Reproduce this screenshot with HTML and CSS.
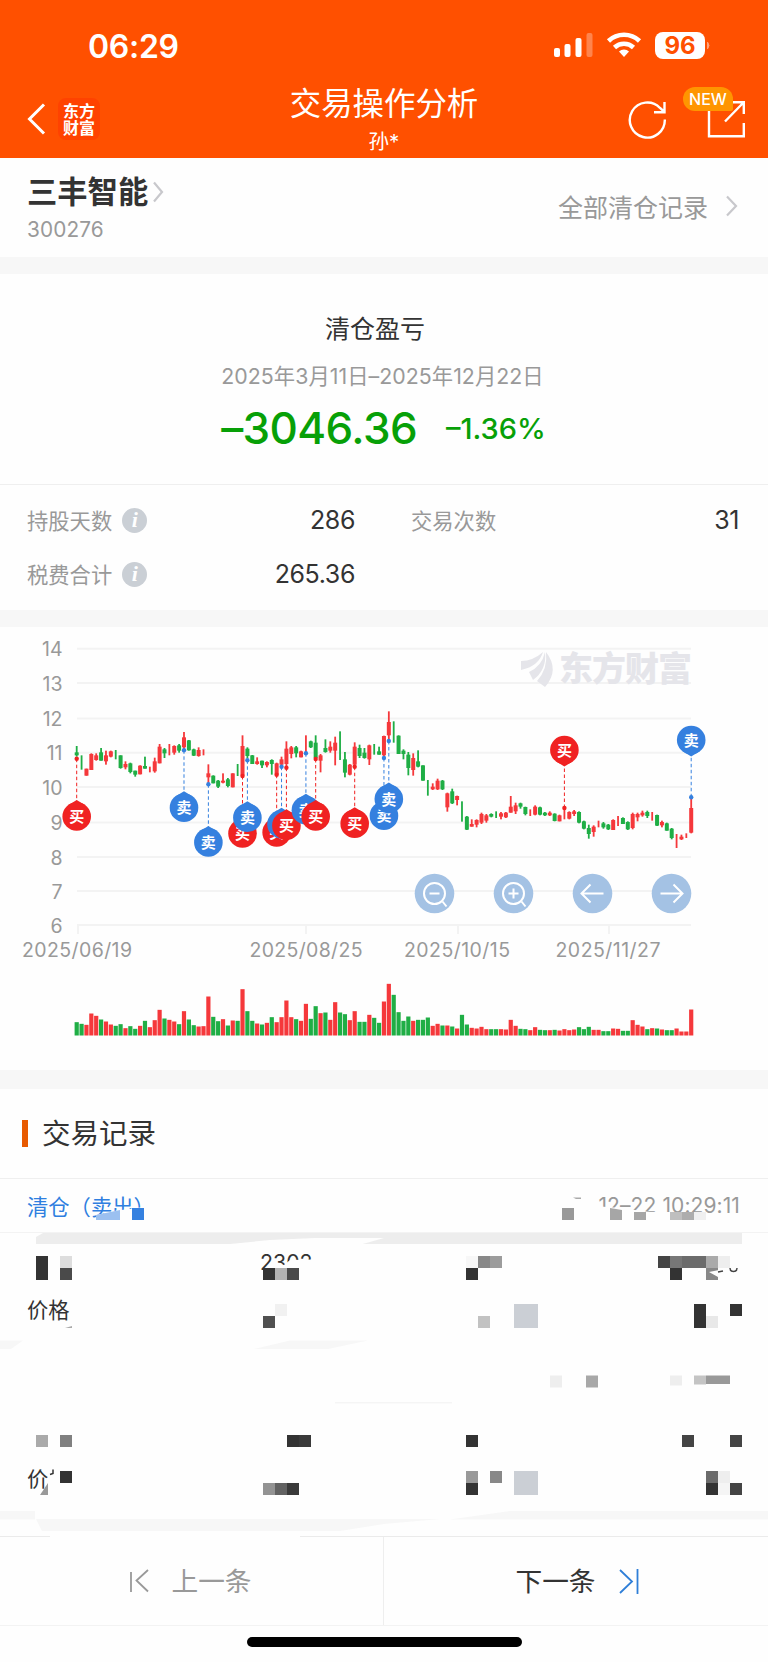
FILE: index.html
```html
<!DOCTYPE html>
<html lang="zh-CN">
<head>
    <meta charset="UTF-8">
    <meta name="viewport" content="width=device-width, initial-scale=1.0">
    <title>交易操作分析</title>
    <link rel="stylesheet" href="styles.css">
</head>
<body>
    <header>
        <div class="status-bar">
            <span class="time">06:29</span>
            <svg class="status-icons" width="160" height="30" viewBox="0 0 160 30">
                <g fill="#fff">
                    <rect x="3" y="17" width="6" height="9" rx="2"/>
                    <rect x="13.500" y="13" width="6" height="13" rx="2"/>
                    <rect x="24.500" y="7" width="6" height="19" rx="2"/>
                    <rect x="35.500" y="2" width="6" height="24" rx="2" opacity=".3"/>
                    <path d="M73 26l-5-5.500a7.500 7.500 0 0 1 10 0z"/>
                </g>
                <g fill="none" stroke="#fff" stroke-width="4.600">
                    <path d="M63.500 16.500a14 14 0 0 1 19 0"/>
                    <path d="M57.500 10a22.500 22.500 0 0 1 31 0"/>
                </g>
                <rect x="104" y="1" width="50" height="27" rx="8" fill="#fff"/>
                <path d="M156.500 11q3 3.500 0 7z" fill="#ffa27a" stroke="#ffa27a"/>
                <text x="129" y="23" class="battery">96</text>
            </svg>
        </div>
        <div class="nav-bar">
            <svg width="20" height="32" viewBox="0 0 20 32" fill="none" stroke="#fff" stroke-width="3"><path d="M18 1.500L3.500 16 18 30.500"/></svg>
            <div class="logo">东方<br>财富</div>
            <div class="titles">
                <h1>交易操作分析</h1>
                <p>孙*</p>
            </div>
            <div class="tools">
                <svg width="40" height="40" viewBox="0 0 40 40" fill="none" stroke="#fff" stroke-width="2.400"><path d="M37.800 20.500A17.500 17.500 0 1 1 33 9l4 3.500M37.500 3v10.300H27"/></svg>
                <svg width="40" height="40" viewBox="0 0 40 40" fill="none" stroke="#fff" stroke-width="2.400"><path d="M12 3.500H3v33.800h34.800V24M27 3.200h10.800V15M37.500 3.500L19 22.500"/></svg>
                <span class="badge">NEW</span>
            </div>
        </div>
    </header>

    <section class="stock">
        <div>
            <h2>三丰智能<svg width="14" height="22" viewBox="0 0 14 22"><path d="M3 1.500l8 9.500-8 9.500"/></svg></h2>
            <p>300276</p>
        </div>
        <a class="all">全部清仓记录<svg width="14" height="22" viewBox="0 0 14 22"><path d="M2 1.500l9 9.500-9 9.500"/></svg></a>
    </section>

    <section class="profit">
        <h3>清仓盈亏</h3>
        <p class="range">2025年3月11日–2025年12月22日</p>
        <p class="result"><b>–3046.36</b><span>–1.36%</span></p>
    </section>

    <section class="stats">
        <div class="stat"><span>持股天数</span><i>i</i><em>286</em></div>
        <div class="stat"><span>交易次数</span><em>31</em></div>
        <div class="stat"><span>税费合计</span><i>i</i><em>265.36</em></div>
    </section>

    <section class="chart">
        <svg id="chart" width="768" height="443" viewBox="0 627 768 443"></svg>
    </section>

    <section class="records">
        <h3 class="records-title">交易记录</h3>
        <div class="record-head">
            <span>清仓（卖出）</span>
            <time>12–22 10:29:11</time>
        </div>
        <div class="record-row"><span></span><span class="amount">2302</span></div>
        <div class="record-row"><span>价格</span></div>
        <div class="record-row last"><span>价</span></div>
        <svg id="mosaic" class="mosaic" width="768" height="358" viewBox="0 1179 768 358"></svg>
    </section>

    <footer>
        <div class="prev">
            <svg width="20" height="26" viewBox="0 0 20 26"><path d="M2 4v20M19 2L7.500 12.500 19 23.500"/></svg>
            <span>上一条</span>
        </div>
        <div class="next">
            <span>下一条</span>
            <svg width="22" height="28" viewBox="0 0 22 28"><path d="M2 3l12 11.500L2 26M19.500 2v25"/></svg>
        </div>
    </footer>
    <div class="home"></div>

    <script src="script.js"></script>
</body>
</html>
```

FILE: styles.css
```css
* {
    box-sizing: border-box;
}

body {
    font-family: Inter, "Noto Sans CJK SC", sans-serif;
    margin: 0;
    height: 1662px;
    background-color: #fefefe;
    color: #333;
    overflow: hidden;
}

h1, h2, h3, p {
    margin: 0;
    font-weight: 400;
}

header {
    height: 158px;
    background-color: #ff5000;
    color: white;
}

.status-bar {
    height: 82px;
    padding: 31px 57px 0 88px;
    display: flex;
    justify-content: space-between;
}

.time {
    font-size: 32px;
    line-height: 31px;
    font-weight: 600;
    letter-spacing: -0.3px;
}

.battery {
    font-size: 24px;
    font-weight: 700;
    fill: #ff5000;
    text-anchor: middle;
}

.nav-bar {
    position: relative;
    height: 76px;
    padding: 0 22px 2px 26px;
    display: flex;
    align-items: center;
}

.logo {
    width: 42px;
    height: 42px;
    margin-left: 12px;
    border-radius: 8px;
    background-color: #ff4200;
    font-family: "Noto Sans CJK SC", sans-serif;
    font-size: 16px;
    line-height: 17px;
    font-weight: 700;
    padding-top: 4px;
    text-align: center;
}

.titles {
    position: absolute;
    left: 0;
    right: 0;
    top: 2px;
    text-align: center;
}

.titles h1 {
    font-size: 31.4px;
    line-height: 40px;
}

.titles p {
    font-size: 20.5px;
    line-height: 35px;
}

.tools {
    position: relative;
    margin-left: auto;
    display: flex;
    gap: 39px;
}

.badge {
    position: absolute;
    left: 56px;
    top: -12px;
    width: 50px;
    height: 24px;
    border-radius: 12px 12px 2px 12px;
    background-color: #ff9500;
    font-size: 16px;
    line-height: 24px;
    font-weight: 500;
    text-align: center;
}

.stock {
    height: 116px;
    padding: 15px 29px 0 27px;
    border-bottom: 17px solid #f7f7f7;
    display: flex;
    justify-content: space-between;
}

.stock h2 {
    font-size: 30.3px;
    line-height: 39px;
    font-weight: 700;
}

.stock svg {
    fill: none;
    stroke: #c8c8cc;
    stroke-width: 2.2;
    margin-left: 3px;
}

.stock p {
    color: #999;
    font-size: 20.8px;
    line-height: 35px;
    letter-spacing: 0.1px;
}

.all {
    display: flex;
    align-items: center;
    height: 66px;
    color: #999;
    font-size: 25px;
}

.stock .all svg {
    margin-left: 17px;
}

.profit {
    height: 211px;
    padding-top: 35px;
    border-bottom: 1px solid #efefef;
    text-align: center;
}

.profit h3 {
    padding-right: 18px;
    font-size: 25px;
    line-height: 40px;
}

.range {
    margin-top: 7px;
    padding-right: 3px;
    color: #999;
    font-size: 21.3px;
    line-height: 40px;
    letter-spacing: 0.05px;
}

.result {
    height: 64px;
    padding-right: 1px;
    display: flex;
    justify-content: center;
    align-items: center;
    gap: 29px;
    color: #07a007;
}

.result b {
    font-size: 44px;
    font-weight: 550;
    letter-spacing: -0.6px;
}

.result span {
    font-size: 29px;
    font-weight: 550;
    letter-spacing: 0;
}

.stats {
    height: 142px;
    padding: 8px 28px 0 27px;
    border-bottom: 17px solid #f7f7f7;
    display: grid;
    grid-template-columns: 328px 328px;
    grid-auto-rows: 54px;
    column-gap: 56px;
}

.stat {
    display: flex;
    align-items: center;
    color: #999;
    font-size: 21.3px;
}

.stat span {
    padding-bottom: 2px;
}

.stat i {
    width: 25px;
    height: 25px;
    margin-left: 10px;
    border-radius: 50%;
    background-color: #cacfd5;
    color: white;
    font: italic bold 22px/24px "Liberation Serif", serif;
    text-align: center;
}

.stat em {
    margin-left: auto;
    color: #333;
    font-size: 25px;
    font-style: normal;
    letter-spacing: -0.4px;
}

.chart {
    height: 462px;
    border-bottom: 19px solid #f7f7f7;
}

.chart svg {
    display: block;
}

.grid {
    stroke: #f3f3f3;
    stroke-width: 2;
}

.axis {
    fill: #999;
    font-size: 19.5px;
}

.watermark {
    fill: #e5e5ea;
    font-size: 34px;
    font-weight: 900;
}

.pin-text {
    fill: white;
    font-size: 15px;
    font-weight: 700;
    text-anchor: middle;
}

.control {
    fill: none;
    stroke: white;
    stroke-width: 2;
}

.records {
    position: relative;
    height: 447px;
}

.records-title {
    height: 90px;
    padding-left: 42px;
    border-bottom: 1px solid #efefef;
    font-size: 28.5px;
    line-height: 89px;
}

.records-title::before {
    content: "";
    float: left;
    width: 6px;
    height: 27px;
    margin: 31px 0 0 -20px;
    background-color: #e85a00;
}

.record-head {
    height: 54px;
    padding: 0 28px 1px 27px;
    display: flex;
    justify-content: space-between;
    align-items: center;
    border-bottom: 1px solid #f3f3f3;
    color: #2f7fe0;
    font-size: 21.3px;
}

.record-head time {
    color: #999;
    font-size: 21px;
    letter-spacing: 0.1px;
}

.record-row {
    height: 46px;
    padding: 0 27px;
    display: grid;
    grid-template-columns: 233px 1fr;
    align-items: center;
    font-size: 21.3px;
}

.record-row:nth-of-type(2) {
    margin-top: 6px;
}

.last {
    margin-top: 123px;
}

.mosaic {
    position: absolute;
    left: 0;
    top: 90px;
}

footer {
    height: 90px;
    display: flex;
    border-bottom: 1px solid #f3f3f3;
    font-size: 26.7px;
}

footer div {
    flex: 1;
    display: flex;
    align-items: center;
    justify-content: center;
}

footer span {
    padding-bottom: 2px;
}

.prev {
    padding-right: 2px;
    gap: 22px;
    border-right: 1px solid #eee;
    color: #999;
}

.next {
    gap: 22px;
    padding-left: 3px;
}

footer svg {
    fill: none;
    stroke: #999;
    stroke-width: 1.8;
}

.next svg {
    stroke: #2f7fd8;
}

.home {
    width: 275px;
    height: 10px;
    margin: 11px auto 0;
    border-radius: 5px;
    background-color: black;
}
```

FILE: script.js
```js
const RED = '#f5383b', GREEN = '#1fae45';
const STEP = 4.877, START = 76.7;
const xAt = i => START + STEP * i;

// color, wick top, wick bottom, body top, body bottom, volume (thirds of a pixel)
const days = `g 348 380 367 376 40|g 376 419 0 0 35|r 416 437 416 437 32|r 370 420 372 420 66|r 370 392 376 390 59|g 354 392 367 392 48|r 362 404 376 394 42|r 362 382 364 380 33|g 360 388 0 0 29|g 376 416 376 414 34
r 394 418 402 412 22|g 398 430 400 426 28|g 422 440 422 434 20|r 406 433 407 433 29|g 380 416 408 416 44|r 410 427 0 0 25|r 383 428 394 424 46|r 342 400 350 400 77|g 354 384 358 370 51|r 342 376 0 0 47
r 346 374 348 368 42|g 342 368 346 362 34|r 306 360 322 352 73|g 330 362 331 361 48|g 356 378 358 377 31|r 352 380 360 378 27|r 358 376 0 0 28|r 403 460 430 442 117|g 436 460 437 460 56|g 450 474 452 470 43
r 430 460 452 458 49|g 444 472 448 468 30|r 430 472 430 472 45|g 402 438 0 0 44|r 316 437 348 437 139|g 352 385 356 378 73|g 375 402 376 402 44|r 382 404 394 402 36|g 392 414 392 406 33|r 394 412 396 406 38
g 388 434 390 402 55|r 398 433 400 433 40|r 380 408 388 404 55|r 334 410 356 402 105|r 348 385 352 372 55|g 348 382 352 370 49|r 362 382 364 382 44|r 316 370 0 0 95|g 332 354 334 352 50|g 316 386 338 384 88
r 372 427 376 392 67|g 328 368 354 366 69|r 334 368 350 362 47|r 320 406 338 362 100|g 304 390 0 0 69|g 366 442 388 428 64|r 402 436 404 434 46|r 337 408 350 404 73|g 344 384 354 378 41|g 354 386 368 384 41
r 344 405 346 388 62|g 342 374 0 0 53|g 350 374 364 374 38|r 317 384 318 376 102|r 244 330 276 316 155|g 274 338 0 0 122|g 316 372 317 372 70|g 358 388 362 372 44|g 366 436 374 414 57|r 370 437 384 420 44
g 361 412 394 410 47|g 406 452 406 452 47|g 450 497 0 0 54|r 460 480 470 478 29|r 446 480 452 478 35|g 450 480 452 478 30|r 488 545 490 532 30|g 476 522 484 520 27|r 497 526 498 510 21|g 514 575 0 0 62
g 558 600 560 599 33|r 568 590 582 590 23|r 568 592 570 584 21|r 548 582 552 578 26|r 552 578 556 572 19|g 550 562 552 560 19|g 544 564 0 0 19|r 546 568 550 560 19|r 546 564 548 562 18|r 498 548 530 548 47
r 518 552 526 544 29|g 518 536 520 530 20|g 530 556 531 552 19|r 538 558 0 0 16|r 526 556 530 554 25|g 530 556 532 554 17|g 546 558 548 556 16|r 544 558 548 556 16|g 550 574 551 573 17|r 554 574 556 574 15
r 532 568 0 0 19|r 544 568 546 566 16|r 540 558 544 552 18|g 544 580 546 578 25|g 572 598 574 596 19|g 584 626 594 612 26|r 586 620 590 606 17|r 572 592 0 0 17|g 576 596 580 592 13|g 582 600 584 598 13
r 568 600 570 600 21|r 558 588 0 0 20|g 562 582 564 582 14|g 574 600 576 598 14|r 548 598 552 594 46|r 548 574 552 562 32|r 542 560 548 556 27|g 542 564 546 558 19|r 546 572 0 0 22|g 554 588 555 587 21
r 572 592 576 586 18|g 578 602 580 602 16|g 594 628 596 624 16|r 612 654 0 0 21|r 614 630 620 628 12|r 610 624 0 0 12|r 507 610 534 608 78`.split(/[|\n]/);

// day index, price dot y, circle y, side
const pins = [
    [0, 758.7, 816.5, '买'], [22, 750.3, 807.7, '卖'], [27, 784.3, 842.4, '卖'],
    [34, 776, 833.4, '买'], [35, 760.3, 817.7, '卖'], [41, 774.7, 832.4, '买'],
    [42, 766.7, 824.2, '卖'], [43, 767.7, 825.7, '买'], [47, 753.3, 810.2, '卖'],
    [49, 759, 816.5, '买'], [57, 766.7, 823.7, '买'], [63, 758, 815.7, '卖'],
    [64, 741, 799, '卖'], [100, 808, 750, '买'], [126, 797.3, 740, '卖']
];

function rect(x, y, w, h, fill) {
    return `<rect x="${x}" y="${y}" width="${w}" height="${h}" fill="${fill}"/>`;
}

function drawChart() {
    let svg = '';

    [648.7, 683, 718.5, 752.7, 787, 822.5, 857, 891, 925].forEach((y, i) => {
        svg += `<path class="grid" d="M77 ${y}H691"/>`;
        svg += `<text class="axis" x="62.500" y="${y + 7.5}" text-anchor="end">${14 - i}</text>`;
    });

    [[78, 77, '2025/06/19', 110], [306, 306, '2025/08/25', 113], [458, 457, '2025/10/15', 106], [609, 608, '2025/11/27', 105]].forEach(d => {
        svg += `<path class="grid" d="M${d[0]} 925v9"/>`;
        svg += `<text class="axis" x="${d[1]}" y="956.500" text-anchor="middle" textLength="${d[3]}">${d[2]}</text>`;
    });

    // watermark
    svg += `<g fill="#e5e5ea"><path d="M521 661q12 0 22-9-4 14-22 18z"/><path d="M529 672q13-6 16-20 2 18-12 28z"/><path d="M537 681q11-12 9-29 14 18-1 35z"/></g>`;
    svg += `<text class="watermark" x="559" y="681" textLength="133">东方财富</text>`;

    days.forEach((day, i) => {
        const d = day.trim().split(' ');
        const color = d[0] === 'r' ? RED : GREEN;
        const n = d.slice(1).map(v => v / 3);
        const x = xAt(i);
        svg += rect(x - 0.9, 630 + n[0], 1.8, n[1] - n[0], color);
        if (n[2]) svg += rect(x - 2, 630 + n[2], 4, n[3] - n[2], color);
        svg += rect(x - 2.1, 1035.5 - n[4], 4.2, n[4], color);
    });

    pins.forEach(([i, dot, y, side]) => {
        const x = xAt(i);
        const color = side === '买' ? '#f02222' : '#3580df';
        const dir = y > dot ? -1 : 1;
        svg += `<path d="M${x} ${dot}V${y}" stroke="${color}" stroke-width="1" stroke-dasharray="3.500 2.500"/>`;
        svg += `<circle cx="${x}" cy="${dot}" r="2.200" fill="${color}"/>`;
        svg += `<path d="M${x - 9} ${y + dir * 11}L${x} ${y + dir * 16.5}L${x + 9} ${y + dir * 11}z" fill="${color}"/>`;
        svg += `<circle cx="${x}" cy="${y}" r="14.300" fill="${color}"/>`;
        svg += `<text class="pin-text" x="${x}" y="${y + 5.5}">${side}</text>`;
    });

    const icons = [
        'M-5 0H5M8 8l4 5', 'M-5 0H5M0-5V5M8 8l4 5',
        'M11 0H-10M-2-9l-9 9 9 9', 'M-11 0H10M2-9l9 9-9 9'
    ];
    icons.forEach((d, i) => {
        svg += `<g transform="translate(${434.5 + i * 79} 893.500)"><circle r="19.800" fill="#a4c2e4"/><g class="control">`;
        if (i < 2) svg += '<circle r="10.500"/>';
        svg += `<path d="${d}"/></g></g>`;
    });

    document.getElementById('chart').innerHTML = svg;
}

function drawMosaic() {
    const poly = (points, fill) => `<polygon points="${points}" fill="${fill}"/>`;
    const bg = '#fefefe';
    let svg = '';

    svg += poly('36,1237 43,1233 742,1233 742,1244 36,1244', '#ededed');
    svg += poly('225,1244.5 270,1240 315,1238 384,1238 361,1244.5', bg);
    svg += poly('96,1215 120,1210 120,1221 96,1221', bg);
    svg += poly('114,1211 144,1207 144,1222 120,1222', bg);
    svg += poly('96,1215 120,1210 120,1220 96,1220', '#9bc0f0');
    svg += poly('594,1206 620,1208 650,1212 706,1212 706,1222 594,1222', bg);
    svg += poly('610,1208 622,1210 622,1220 610,1220', '#a6a6a6');
    svg += poly('573,1197.500 581,1197.500 581,1199 576,1199', '#aaa');
    svg += poly('263,1270 274,1266 276,1263 284,1265 290,1260 312,1259.500 312,1280 263,1280', bg);
    svg += poly('65,1328 72,1326 72,1328', '#aaa');
    svg += poly('0,1340.500 23,1340.500 11,1349 0,1349', '#f7f7f7');
    svg += poly('254,1349 290,1340.500 368,1340.500 328,1349', '#f7f7f7');
    svg += rect(335, 1402, 117, 1.5, '#f5f5f5');
    svg += poly('40,1495 48,1483 48,1495', '#999');
    svg += '<path d="M50 1474.500l3-1v-4" fill="none" stroke="#333" stroke-width="1.500"/>';
    svg += rect(0, 1511, 35, 8.5, '#f7f7f7');
    svg += poly('36,1519 440,1519 384,1524 340,1531 42,1531', '#f7f7f7');
    svg += poly('450,1519.500 510,1511 768,1511 768,1519.500', '#f7f7f7');
    svg += rect(0, 1536, 50, 1, '#ebebeb') + rect(300, 1536, 468, 1, '#ebebeb');

    const blocks = [
        [132, 1208, 12, 12, '#3581e0'],
        [562, 1208, 12, 12, '#999'], [634, 1212, 12, 8, '#a6a6a6'],
        [670, 1212, 12, 8, '#bfbfbf'], [682, 1212, 12, 8, '#adadad'], [694, 1212, 12, 8, '#f0f0f0'],
        [36, 1256, 12, 24, '#333'], [60, 1256, 12, 12, '#ddd'], [60, 1268, 12, 12, '#4a4a4a'],
        [263, 1268, 12, 12, '#333'], [275, 1268, 12, 12, '#b3b3b3'], [287, 1268, 12, 12, '#4a4a4a'],
        [275, 1304, 12, 12, '#f1f1f1'], [263, 1316, 12, 12, '#505050'],
        [466, 1256, 12, 12, '#f7f7f7'], [478, 1256, 12, 12, '#888'], [490, 1256, 12, 12, '#9c9c9c'], [466, 1268, 12, 12, '#333'],
        [658, 1256, 12, 12, '#444'], [670, 1256, 12, 12, '#777'], [682, 1256, 24, 12, '#6b6b6b'],
        [706, 1256, 12, 12, '#aaa'], [718, 1256, 12, 12, '#eee'], [670, 1268, 12, 12, '#333'], [706, 1268, 12, 12, '#888'],
        [478, 1316, 12, 12, '#c2c2c2'], [514, 1304, 24, 24, '#cbcfd5'],
        [694, 1304, 12, 24, '#333'], [706, 1316, 12, 12, '#e8e8e8'], [730, 1304, 12, 12, '#333'],
        [550, 1375.5, 12, 12, '#eee'], [586, 1375.5, 12, 12, '#a8a8a8'],
        [670, 1375.5, 12, 10, '#eee'], [694, 1375.5, 12, 9, '#c4c4c4'], [706, 1375.5, 24, 8.5, '#999'],
        [36, 1435, 12, 12, '#aaa'], [60, 1435, 12, 12, '#808080'],
        [287, 1435, 12, 12, '#333'], [299, 1435, 12, 12, '#3a3a3a'],
        [466, 1435, 12, 12, '#333'], [682, 1435, 12, 12, '#444'], [730, 1435, 12, 12, '#444'],
        [60, 1471, 12, 12, '#333'],
        [263, 1483, 12, 12, '#939393'], [275, 1483, 12, 12, '#626262'], [287, 1483, 12, 12, '#3a3a3a'],
        [466, 1471, 12, 12, '#999'], [490, 1471, 12, 12, '#888'], [466, 1483, 12, 12, '#333'],
        [514, 1471, 24, 24, '#cbcfd5'],
        [706, 1471, 12, 12, '#6b6b6b'], [718, 1471, 12, 12, '#eee'],
        [706, 1483, 12, 12, '#333'], [718, 1483, 12, 12, '#f5f5f5'], [730, 1483, 12, 12, '#444']
    ];
    blocks.forEach(b => svg += rect(...b));

    // leftovers of the hidden amount on the right
    svg += poly('709,1272 719,1270 724,1272 722,1275 731,1279.500 718,1277', bg);
    svg += '<path d="M730 1268q0 3.500 3.500 3.500t3.500-3.500M718 1272l5-1" fill="none" stroke="#444" stroke-width="1.500"/>';

    document.getElementById('mosaic').innerHTML = svg;
}

drawChart();
drawMosaic();
```
